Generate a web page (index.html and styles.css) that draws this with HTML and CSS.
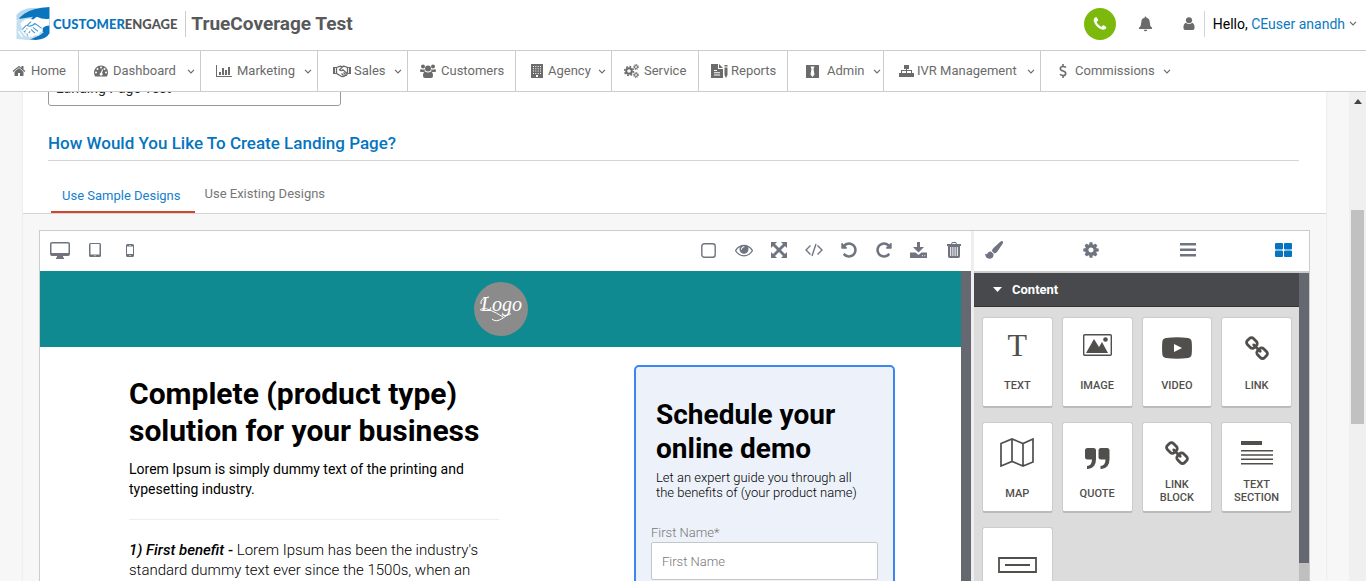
FILE: index.html
```html
<!DOCTYPE html>
<html lang="en">
<head>
<meta charset="utf-8">
<title>TrueCoverage Test</title>
<link rel="stylesheet" href="styles.css">
</head>
<body>
<header class="header">
  <a class="brand" href="#">
    <svg class="brand-mark" viewBox="0 0 34 34" aria-hidden="true">
      <path d="M0 8Q5 2 15 1L24 1 15 8 0 14Z" fill="#b5d7ed"/>
      <path d="M8 7Q16 1 34 0V27Q31 33 20 34L7 33 13 29 4 15 3 11Z" fill="#0b74bf"/>
      <path d="M0 15 4 12 17 10 13 15 28 26 24 29 13 34 0 33Z" fill="#c3dff1"/>
      <path d="M4 17Q10 10 17 13L21 10Q27 13 34 12V19Q29 19 27 22L27 25 24 26 23 29 19 29 16 31 12 29 6 23Z" fill="#fff"/>
      <path d="M15 15 11 19Q15 21 19 17L26 22M17 21 22 25M15 23 19 27M10 19 6 23M11 22 8 26M14 25 11 29" fill="none" stroke="#4e9bd1" stroke-width="1.200"/>
      <path d="M5 24 10 30M9 22 14 31M2 25 6 31" fill="none" stroke="#fff" stroke-width="1.500"/>
    </svg>
    <span class="brand-name"><span class="blue">CUSTOMER</span>ENGAGE</span>
  </a>
  <h1 class="site-title">TrueCoverage Test</h1>
  <div class="account">
    <button class="call" aria-label="Call"><svg viewBox="0 0 1792 1792"><path d="M1600 1240q0 27-10 70.500t-21 68.500q-21 50-122 106-94 51-186 51-27 0-53-3.500t-57.500-12.500-47-14.500-55.500-20.500-49-18q-98-35-175-83-127-79-264-216t-216-264q-48-77-83-175-3-9-18-49t-20.500-55.500-14.500-47-12.500-57.500-3.500-53q0-92 51-186 56-101 106-122 25-11 68.500-21t70.500-10q14 0 21 3 18 6 53 76 11 19 30 54t35 63.500 31 53.500q3 4 17.500 25t21.500 35.500 7 28.500q0 20-28.500 50t-62 55-62 53-28.500 46q0 9 5 22.500t8.500 20.500 14 24 11.500 19q76 137 174 235t235 174q2 1 19 11.500t24 14 20.500 8.500 22.500 5q18 0 46-28.500t53-62 55-62 50-28.500q14 0 28.500 7t35.500 21.500 25 17.500q25 15 53.500 31t63.500 35 54 30q70 35 76 53 3 7 3 21z"/></svg></button>
    <button class="plain" aria-label="Notifications"><svg class="bell" viewBox="0 0 16 16"><path d="M8 0q1 0 1 1.300Q12.500 2 12.500 6q0 4 2.500 6v1.300H1V12q2.500-2 2.500-6 0-4 3.500-4.700Q7 0 8 0ZM6 14h4q-.3 1.800-2 1.800T6 14Z"/></svg></button>
    <button class="plain" aria-label="Profile"><svg class="person" viewBox="0 0 12 14"><circle cx="6" cy="3.500" r="3.300"/><path d="M2.500 6.200Q6 9 9.500 6.200 12 7.200 12 11.500 12 14 10 14H2Q0 14 0 11.500 0 7.200 2.500 6.200Z"/></svg></button>
    <a class="hello" href="#"><span>Hello, <span class="user">CEuser anandh</span></span><svg class="chev" viewBox="0 0 8 5"><path d="M1 .8 4 3.800 7 .8"/></svg></a>
  </div>
</header>

<nav class="nav">
  <a href="#"><svg class="i14" viewBox="0 0 1792 1792"><path d="M1472 992v480q0 26-19 45t-45 19h-384v-384h-256v384h-384q-26 0-45-19t-19-45v-480q0-1 .5-3t.5-3l575-474 575 474q1 2 1 6zm223-69l-62 74q-8 9-21 11h-3q-13 0-21-7l-692-577-692 577q-12 8-24 7-13-2-21-11l-62-74q-8-10-7-23.500t11-21.500l719-599q32-26 76-26t76 26l244 204v-195q0-14 9-23t23-9h192q14 0 23 9t9 23v408l219 182q10 8 11 21.500t-7 23.500z"/></svg><span>Home</span></a>
  <a href="#" class="menu"><svg class="i14" viewBox="0 0 14 14"><path fill-rule="evenodd" d="M7 1.500a7 7 0 0 1 7 7q0 2-1 3.700-.2.300-.6.300H1.600q-.4 0-.6-.3Q0 10.500 0 8.500a7 7 0 0 1 7-7ZM7 2.500a1 1 0 1 0 0 2 1 1 0 0 0 0-2ZM3.500 4a1 1 0 1 0 0 2 1 1 0 0 0 0-2ZM10.500 4a1 1 0 1 0 0 2 1 1 0 0 0 0-2ZM2 7.500a1 1 0 1 0 0 2 1 1 0 0 0 0-2ZM12 7.500a1 1 0 1 0 0 2 1 1 0 0 0 0-2ZM8 5.300 7 8.600a1.500 1.500 0 1 0 1.100.3L9 5.600Z"/></svg><span>Dashboard</span><svg class="chev" viewBox="0 0 8 5"><path d="M1 .8 4 3.800 7 .8"/></svg></a>
  <a href="#" class="menu"><svg class="i16" viewBox="0 0 16 14"><path d="M0 1h1v11h15v1H0ZM3 8h2v3H3ZM6 4h2v7H6ZM9 6h2v5H9ZM12 3h2v8h-2Z"/></svg><span>Marketing</span><svg class="chev" viewBox="0 0 8 5"><path d="M1 .8 4 3.800 7 .8"/></svg></a>
  <a href="#" class="menu tight"><svg class="i18 line" viewBox="0 0 18 14"><path stroke-width="1.300" d="M3.500 3.500 6.500 2.300Q8 2 9 3 10 2 11.500 2.300L14.500 3.500V9.300Q14 11.500 12 11.500 10.500 13.200 8.500 12.500L3.500 9.300ZM9.500 3 6.500 5.800Q8 7.500 10 5.800L14 9.500M8.500 9.500l2 2M10.500 8.500l2 2"/><path stroke-width="2" d="M1 3v7M17 3v7"/><path d="M1 3.500h3M1 9.500h3M14 3.500h3M14 9.500h3"/></svg><span>Sales</span><svg class="chev" viewBox="0 0 8 5"><path d="M1 .8 4 3.800 7 .8"/></svg></a>
  <a href="#"><svg class="i16" viewBox="0 0 16 14"><circle cx="3" cy="2.500" r="2"/><circle cx="13" cy="2.500" r="2"/><circle cx="8" cy="4.500" r="3"/><path d="M1 5q2 1.300 3.500 0Q4.500 6.500 5 7.400L3.500 8H1Q0 8 0 7 0 5.500 1 5ZM15 5q-2 1.300-3.500 0 0 1.500-.5 2.400l1.500.6H15q1 0 1-1 0-1.500-1-2ZM5 7.500q3 2 6 0 2 .8 2 4.500 0 2-2 2H5q-2 0-2-2 0-3.700 2-4.500Z"/></svg><span>Customers</span></a>
  <a href="#" class="menu"><svg class="i12" viewBox="0 0 12 14"><path fill-rule="evenodd" d="M0 0h12v14H0ZM2 2v1h1V2ZM4.300 2v1h1V2ZM6.700 2v1h1V2ZM9 2v1h1V2ZM2 4.300v1h1v-1ZM4.300 4.300v1h1v-1ZM6.700 4.300v1h1v-1ZM9 4.300v1h1v-1ZM2 6.600v1h1v-1ZM4.300 6.600v1h1v-1ZM6.700 6.600v1h1v-1ZM9 6.600v1h1v-1ZM2 9v1h1V9ZM4.300 9v1h1V9ZM6.700 9v1h1V9ZM9 9v1h1V9ZM5 11v2h2v-2Z"/></svg><span>Agency</span><svg class="chev" viewBox="0 0 8 5"><path d="M1 .8 4 3.800 7 .8"/></svg></a>
  <a href="#"><svg class="i15 line" viewBox="0 0 15 14"><circle cx="5" cy="7" r="2.800" stroke-width="2"/><circle cx="5" cy="7" r="4.400" stroke-width="1.600" stroke-dasharray="1.750 1.700"/><circle cx="12" cy="3" r="1.500"/><circle cx="12" cy="3" r="2.500" stroke-dasharray="1.100 .86"/><circle cx="12" cy="11" r="1.500"/><circle cx="12" cy="11" r="2.500" stroke-dasharray="1.100 .86"/></svg><span>Service</span></a>
  <a href="#" class="tight"><svg class="i17" viewBox="0 0 17 14"><path fill-rule="evenodd" d="M0 0h7v5h5v9H0ZM3 6v1h3V6ZM3 8.300v1h6v-1ZM3 10.600v1h6v-1ZM8 0l4 4H8ZM13.500 1h3v1.500h-3ZM13.500 3.500h3V11L15 14l-1.500-3Z"/></svg><span>Reports</span></a>
  <a href="#" class="menu wide"><svg class="i13" viewBox="0 0 13 13"><path fill-rule="evenodd" d="M0 0h13v13H0ZM4.500 1.500 5.500 4 4.500 9.500l2 2.500 2-2.500L7.500 4l1-2.500Z"/></svg><span>Admin</span><svg class="chev" viewBox="0 0 8 5"><path d="M1 .8 4 3.800 7 .8"/></svg></a>
  <a href="#" class="menu tight"><svg class="i15" viewBox="0 0 15 14"><path d="M5 1h5v4H8v1h5v3h2v4h-5V9h2V7H8v2h2v4H5V9h2V7H3v2h2v4H0V9h2V6h5V5H5Z"/></svg><span>IVR Management</span><svg class="chev" viewBox="0 0 8 5"><path d="M1 .8 4 3.800 7 .8"/></svg></a>
  <a href="#" class="menu wide"><svg class="i8 line" viewBox="0 0 8 14"><path stroke-width="1.600" d="M7 3.500Q6 2.500 4 2.500 1.300 2.500 1.300 4.600 1.300 6.300 4 7 6.700 7.700 6.700 9.400 6.700 11.500 4 11.500 2 11.500 1 10.300M4 0v2.500M4 11.500V14"/></svg><span>Commissions</span><svg class="chev" viewBox="0 0 8 5"><path d="M1 .8 4 3.800 7 .8"/></svg></a>
</nav>

<main class="viewport">
  <div class="page">
    <section class="setup">
      <input class="page-name" type="text" value="Landing Page Test" aria-label="Landing page name">
      <h2 class="question">How Would You Like To Create Landing Page?</h2>
      <div class="tabs">
        <a class="tab active" href="#">Use Sample Designs</a>
        <a class="tab" href="#">Use Existing Designs</a>
      </div>
    </section>

    <section class="editor">
      <div class="canvas">
        <div class="toolbar">
          <button aria-label="Desktop"><svg width="20" height="17" viewBox="0 0 20 17"><path fill-rule="evenodd" d="M2 0h16q2 0 2 2v10q0 2-2 2h-5v1.500h1V17H6v-1.500h1V14H2q-2 0-2-2V2Q0 0 2 0ZM2 1.500q-.5 0-.5.500v9h17V2q0-.5-.5-.5Z"/></svg></button>
          <button aria-label="Tablet"><svg width="12" height="14" viewBox="0 0 12 14"><path fill-rule="evenodd" d="M1.500 0h9Q12 0 12 1.500v11q0 1.500-1.500 1.500h-9Q0 14 0 12.500v-11Q0 0 1.500 0ZM1.500 1v10.500h9V1ZM5.500 12.200v1h1v-1Z"/></svg></button>
          <button aria-label="Phone"><svg width="8" height="13" viewBox="0 0 8 13"><path fill-rule="evenodd" d="M1.500 0h5Q8 0 8 1.500v10Q8 13 6.500 13h-5Q0 13 0 11.500v-10Q0 0 1.500 0ZM1 2.500v7.500h6V2.500ZM3 1v.5h2V1ZM3.500 11v1h1v-1Z"/></svg></button>
          <span class="spacer"></span>
          <button aria-label="Outlines"><svg width="15" height="15" viewBox="0 0 15 15"><rect x=".8" y=".8" width="13.400" height="13.400" rx="2.500" fill="none" stroke="#6f7480" stroke-width="1.400"/></svg></button>
          <button aria-label="Preview"><svg width="18" height="18" viewBox="0 0 1792 1792"><path d="M1664 960q-152-236-381-353 61 104 61 225 0 185-131.500 316.500t-316.500 131.500-316.500-131.500-131.500-316.500q0-121 61-225-229 117-381 353 133 205 333.500 326.500t434.500 121.500 434.500-121.500 333.500-326.500zm-720-384q0-20-14-34t-34-14q-125 0-214.500 89.500t-89.500 214.500q0 20 14 34t34 14 34-14 14-34q0-86 61-147t147-61q20 0 34-14t14-34zm848 384q0 34-20 69-140 230-376.500 368.500t-499.500 138.500-499.500-139-376.500-368q-20-35-20-69t20-69q140-229 376.500-368t499.500-139 499.500 139 376.500 368q20 35 20 69z"/></svg></button>
          <button aria-label="Fullscreen"><svg width="16" height="16" viewBox="0 0 16 16"><path d="M0 0h6L4 2l4 4 4-4-2-2h6v6l-2-2-4 4 4 4 2-2v6h-6l2-2-4-4-4 4 2 2H0v-6l2 2 4-4-4-4-2 2Z"/></svg></button>
          <button aria-label="View code"><svg width="18" height="14" viewBox="0 0 18 14"><path d="M5.500 2.500 1 7l4.500 4.500M12.500 2.500 17 7l-4.500 4.500M11 1 7 13" fill="none" stroke="#6f7480" stroke-width="1.400"/></svg></button>
          <button aria-label="Undo"><svg width="18" height="18" viewBox="0 0 1792 1792"><path id="turn" d="M1664 896q0 156-61 298t-164 245-245 164-298 61q-172 0-327-72.500t-264-204.500q-7-10-6.500-22.500t8.500-20.500l137-138q10-9 25-9 16 2 23 12 73 95 179 147t225 52q104 0 198.500-40.500t163.500-109.500 109.500-163.500 40.500-198.500-40.500-198.500-109.500-163.500-163.500-109.500-198.500-40.500q-98 0-188 35.500t-160 101.500l137 138q31 30 14 69-17 40-59 40h-448q-26 0-45-19t-19-45v-448q0-42 40-59 39-17 69 14l130 129q107-101 244.500-156.500t284.500-55.500q156 0 298 61t245 164 164 245 61 298z"/></svg></button>
          <button aria-label="Redo"><svg width="18" height="18" viewBox="0 0 1792 1792"><use href="#turn" transform="translate(1792) scale(-1 1)"/></svg></button>
          <button aria-label="Download"><svg width="17" height="16" viewBox="0 0 17 16"><path fill-rule="evenodd" d="M7 0h3v5h4L8.500 10.500 3 5h4ZM0 10.500h5.500l3 2.500 3-2.500H17V16H0ZM12 13.300v1h1v-1ZM14.300 13.300v1h1v-1Z"/></svg></button>
          <button aria-label="Delete"><svg width="14" height="16" viewBox="0 0 14 16"><path fill-rule="evenodd" d="M5 0h4l1 2h4v2h-1V14q0 2-1.500 2h-9Q1 16 1 14V4H0V2h4ZM5.500 1 5 2h4l-.5-1ZM3.200 5v9h1V5ZM5.400 5v9h1V5ZM7.600 5v9h1V5ZM9.800 5v9h1V5Z"/></svg></button>
        </div>
        <div class="frame">
          <article class="landing">
            <div class="banner">
              <svg class="logo" viewBox="0 0 54 54" role="img" aria-label="Logo"><circle cx="27" cy="27" r="27" fill="#8b8b8b"/><text x="7" y="29" class="logo-text">Logo</text><path d="M6 28Q9 25 16 28T29 35M18 37Q22 41 29 36T37 32M7 22Q6 16 15 15" fill="none" stroke="#fff"/></svg>
            </div>
            <div class="columns">
              <div class="copy">
                <h2 class="headline">Complete (product type) solution for your business</h2>
                <p class="lead">Lorem Ipsum is simply dummy text of the printing and typesetting industry.</p>
                <p class="benefit"><b><i>1) First benefit</i> - </b>Lorem Ipsum has been the industry's standard dummy text ever since the 1500s, when an</p>
              </div>
              <form class="demo">
                <h3 class="demo-title">Schedule your online demo</h3>
                <p class="demo-text">Let an expert guide you through all the benefits of (your product name)</p>
                <label class="field" for="first-name">First Name*</label>
                <input class="box" id="first-name" type="text" placeholder="First Name">
              </form>
            </div>
          </article>
          <div class="track"></div>
        </div>
      </div>

      <aside class="side">
        <div class="side-tabs">
          <button aria-label="Styles"><svg width="18" height="18" viewBox="0 0 18 18"><path d="M17.500.3q1.200.9-.2 3L12 11q-1.400 1.600-3 1.200L7 10q-.2-1.300 1.500-3L15 1Q16.700-.3 17.500.3ZM6.300 10.800 8.500 13q.4 4.700-4.300 4.700Q.5 17.500 0 12.500q1.300 1.300 2.300.3 1.500-2.800 4-2Z"/></svg></button>
          <button aria-label="Settings"><svg width="18" height="18" viewBox="0 0 1792 1792"><path d="M1152 896q0-106-75-181t-181-75-181 75-75 181 75 181 181 75 181-75 75-181zm512-109v222q0 12-8 23t-20 13l-185 28q-19 54-39 91 35 50 107 138 10 12 10 25t-9 23q-27 37-99 108t-94 71q-12 0-26-9l-138-108q-44 23-91 38-16 136-29 186-7 28-36 28h-222q-14 0-24.500-8.500t-11.500-21.500l-28-184q-49-16-90-37l-141 107q-10 9-25 9-14 0-25-11-126-114-165-168-7-10-7-23 0-12 8-23 15-21 51-66.500t54-70.500q-27-50-41-99l-183-27q-13-2-21-12.500t-8-23.500v-222q0-12 8-23t19-13l186-28q14-46 39-92-40-57-107-138-10-12-10-24 0-10 9-23 26-36 98.500-107.500t94.500-71.500q13 0 26 10l138 107q44-23 91-38 16-136 29-186 7-28 36-28h222q14 0 24.500 8.500t11.500 21.500l28 184q49 16 90 37l142-107q9-9 24-9 13 0 25 10 129 119 165 170 7 8 7 22 0 12-8 23-15 21-51 66.500t-54 70.500q26 50 41 98l183 28q13 2 21 12.500t8 23.500z"/></svg></button>
          <button aria-label="Layers"><svg width="16" height="14" viewBox="0 0 16 14"><path d="M0 0h16v2.600H0ZM0 5.500h16v2.600H0ZM0 11h16v2.600H0Z"/></svg></button>
          <button aria-label="Blocks" class="on"><svg width="17" height="14" viewBox="0 0 17 14"><rect width="8" height="6.500" rx="1"/><rect x="9" width="8" height="6.500" rx="1"/><rect y="7.500" width="8" height="6.500" rx="1"/><rect x="9" y="7.500" width="8" height="6.500" rx="1"/></svg></button>
        </div>
        <div class="side-body">
          <div class="blocks">
            <button class="category"><svg width="9" height="5" viewBox="0 0 9 5"><path d="M0 0h9L4.500 5Z"/></svg>Content</button>
            <div class="grid">
              <button class="block"><span class="pic serif-t" aria-hidden="true">T</span>TEXT</button>
              <button class="block"><span class="pic"><svg width="29" height="22" viewBox="0 0 29 22"><rect x=".7" y=".7" width="27.600" height="20.600" rx="1" fill="none" stroke="#514f4c" stroke-width="1.400"/><path d="M3 19 11 5l5 8 3-5 6 11Z"/><circle cx="22.500" cy="5.500" r="2.300"/></svg></span>IMAGE</button>
              <button class="block"><span class="pic low"><svg width="30" height="22" viewBox="0 0 30 22"><path fill-rule="evenodd" d="M4 1Q15-.7 26 1q3.500.5 3.700 4 .5 6 0 12-.2 3.500-3.700 4-11 1.500-22 0-3.500-.5-3.700-4-.5-6 0-12Q.5 1.500 4 1ZM12 7v8l8-4Z"/></svg></span>VIDEO</button>
              <button class="block"><span class="pic low2"><svg width="26" height="26" viewBox="0 0 1792 1792"><path id="chain" d="M1520 1216q0-40-28-68l-208-208q-28-28-68-28-42 0-72 32 3 3 19 18.500t21.500 21.500 15 19 13 25.500 3.500 27.500q0 40-28 68t-68 28q-15 0-27.500-3.500t-25.500-13-19-15-21.500-21.500-18.500-19q-33 31-33 73 0 40 28 68l206 207q27 27 68 27 40 0 68-26l147-146q28-28 28-67zm-703-705q0-40-28-68l-206-207q-28-28-68-28-39 0-68 27l-147 146q-28 28-28 67 0 40 28 68l208 208q27 27 68 27 42 0 72-31-3-3-19-18.500t-21.500-21.500-15-19-13-25.500-3.500-27.500q0-40 28-68t68-28q15 0 27.500 3.500t25.500 13 19 15 21.500 21.500 18.500 19q33-31 33-73zm895 705q0 120-85 203l-147 146q-83 83-203 83-121 0-204-85l-206-207q-83-83-83-203 0-123 88-209l-88-88q-86 88-208 88-120 0-204-84l-208-208q-84-84-84-204t85-203l147-146q83-83 203-83 121 0 204 85l206 207q83 83 83 203 0 123-88 209l88 88q86-88 208-88 120 0 204 84l208 208q84 84 84 204z"/></svg></span>LINK</button>
              <button class="block"><span class="pic tall"><svg width="34" height="29" viewBox="0 0 34 29"><path d="M1 5.500 12 1l11 4.500L33 1v23l-10 4-11-4.500L1 28ZM12 1v22.500M23 5.500V28" fill="none" stroke="#514f4c" stroke-width="1.700"/></svg></span>MAP</button>
              <button class="block"><span class="pic tall drop"><svg width="25" height="21" viewBox="0 0 25 21"><path id="q" d="M2.500 0h6Q11 0 11 2.500V11Q11 20 3 21H2v-3q5-.5 5-6.500H2.500Q0 11.500 0 9V2.500Q0 0 2.500 0Z"/><use href="#q" x="13.500"/></svg></span>QUOTE</button>
              <button class="block two"><span class="pic"><svg width="26" height="26" viewBox="0 0 1792 1792"><use href="#chain"/></svg></span>LINK BLOCK</button>
              <button class="block two"><span class="pic"><svg width="32" height="24" viewBox="0 0 32 24"><path d="M0 0h21v4H0ZM0 9h32v1.400H0ZM0 13.300h32v1.400H0ZM0 17.600h32V19H0ZM0 22h32v1.400H0Z"/></svg></span>TEXT SECTION</button>
              <button class="block last" aria-label="Input"><svg width="39" height="16" viewBox="0 0 39 16"><path d="M1 1h37v14H1ZM7 8h25" fill="none" stroke="#514f4c" stroke-width="1.800"/></svg></button>
            </div>
          </div>
          <div class="track side-track"></div>
        </div>
      </aside>
    </section>
  </div>
  <div class="scrollbar"><svg width="8" height="5" viewBox="0 0 8 5"><path d="M0 5 4 0l4 5Z"/></svg><div class="thumb"></div></div>
</main>
</body>
</html>
```
FILE: styles.css
```css
* { box-sizing: border-box; }
body {
  margin: 0;
  height: 100vh;
  display: flex;
  flex-direction: column;
  overflow: hidden;
  background: #fff;
  color: #000;
  font: 14px/20px Roboto, "Liberation Sans", sans-serif;
}
h1, h2, h3, p { margin: 0; }
a { color: inherit; text-decoration: none; }
button { border: 0; padding: 0; background: none; font: inherit; color: inherit; }
svg { display: block; flex: none; fill: currentColor; }

.header {
  flex: none;
  height: 51px;
  display: flex;
  align-items: center;
  padding: 0 9px 3px 16px;
  border-bottom: 1px solid #ccc;
}
.brand { display: flex; align-items: center; gap: 3px; }
.brand-mark { width: 34px; height: 33px; }
.brand-name { color: #555; font: 900 13px/20px Lato, sans-serif; }
.blue { color: #0b74bf; }
.site-title {
  margin-left: 8px;
  padding-left: 5px;
  border-left: 1px solid #ccc;
  color: #58595b;
  font-size: 19px;
  font-weight: 700;
  line-height: 26px;
}
.account { display: flex; align-items: center; margin-left: auto; color: #6b6b6b; }
.call {
  width: 32px;
  height: 32px;
  display: grid;
  place-items: center;
  border-radius: 50%;
  background: #7cb90c;
  color: #fff;
}
.call svg { width: 16px; height: 16px; }
.plain { margin-left: 22px; }
.bell { width: 15px; height: 16px; }
.plain + .plain { margin-left: 30px; }
.person { width: 12px; height: 13px; }
.hello {
  display: flex;
  align-items: center;
  gap: 4px;
  margin-left: 9px;
  padding-left: 8px;
  border-left: 1px solid #cdd8dd;
  color: #000;
  line-height: 26px;
}
.user { color: #0b7ac0; }
.chev { width: 8px; height: 5px; fill: none; stroke: #6b6b6b; stroke-width: 1.2; }

.nav {
  flex: none;
  height: 41px;
  display: grid;
  grid-template-columns: 79px 122px 117px 90px 108px 96px 87px 89px 96px 157px 1fr;
  border-bottom: 1px solid #ccc;
  color: #6b6b6b;
  font-size: 13px;
}
.nav a {
  display: flex;
  align-items: center;
  gap: 5px;
  padding-left: 12px;
  border-right: 1px solid #ccc;
}
.nav .menu { padding: 0 5px 0 15px; }
.nav .menu .chev { margin-left: auto; }
.nav .tight { gap: 3px; }
.nav .wide { gap: 8px; padding-left: 18px; }
.nav a:last-child { border-right: 0; }
.nav a:last-child .chev { margin-left: 0; }
.line { fill: none; stroke: currentColor; }
.i8 { width: 8px; height: 14px; }
.i12 { width: 12px; height: 14px; }
.i13 { width: 13px; height: 13px; }
.i14 { width: 14px; height: 14px; }
.i15 { width: 15px; height: 14px; }
.i16 { width: 16px; height: 14px; }
.i17 { width: 17px; height: 14px; }
.i18 { width: 18px; height: 14px; }

.viewport { flex: 1; min-height: 0; display: flex; overflow: hidden; background: #f7f7f7; }
.page {
  flex: 1;
  margin: 0 23px;
  display: flex;
  flex-direction: column;
  box-shadow: 0 0 2px #ddd;
}
.setup { flex: none; margin-top: -20px; padding: 0 25px; background: #fff; border-bottom: 1px solid #d5d5d5; }
.page-name {
  display: block;
  width: 293px;
  height: 34px;
  padding: 0 7px 2px;
  border: 1px solid #999;
  border-radius: 3px;
  color: #222;
  font: 14px/20px Roboto, sans-serif;
}
.question {
  margin: 25px 2px 0 0;
  padding-bottom: 5px;
  border-bottom: 1px solid #d5d5d5;
  color: #0575c0;
  font-size: 17px;
  font-weight: 500;
  line-height: 24px;
}
.tabs { display: flex; gap: 10px; padding: 23px 3px 0; color: #777; font-size: 13px; }
.tab { line-height: 20px; }
.tab.active { padding: 2px 14px 5px 11px; border-bottom: 2px solid #d4432c; color: #1680cd; }

.editor {
  flex: 1;
  min-height: 0;
  display: flex;
  margin: 16px 16px 0;
  border: 1px solid #ccc;
  border-bottom: 0;
}
.canvas { flex: 1; display: flex; flex-direction: column; border-right: 3px solid #eee; }
.toolbar {
  flex: none;
  height: 40px;
  display: flex;
  align-items: center;
  padding: 0 0 2px 2px;
  background: #fff;
  color: #6f7480;
}
.toolbar button { width: 35px; height: 38px; display: grid; place-items: center; }
.spacer { flex: 1; }
.frame { flex: 1; min-height: 0; display: flex; overflow: hidden; }
.track { flex: none; width: 10px; background: #656771; }
.landing { flex: 1; background: #fff; }
.banner { height: 76px; display: grid; place-items: center; background: #0e8a90; }
.logo { width: 54px; height: 54px; }
.logo-text { fill: #fff; font: italic 20px "Liberation Serif", serif; }
.columns { display: flex; justify-content: space-between; padding: 18px 66px 0 89px; }
.copy { width: 370px; padding-top: 10px; }
.headline { font-size: 30px; font-weight: 700; line-height: 37px; }
.lead { margin-top: 10px; padding-bottom: 20px; border-bottom: 1px solid #eee; }
.benefit { margin-top: 20px; font-size: 15px; font-weight: 300; }
.benefit b { font-weight: 500; }
.demo {
  width: 261px;
  height: 400px;
  padding: 31px 15px;
  border: 2px solid #3c86f0;
  border-radius: 5px;
  background: #edf2fa;
}
.demo-title { padding: 0 5px; font-size: 28px; font-weight: 700; line-height: 34px; }
.demo-text { margin: 4px 0 24px; padding: 0 20px 0 5px; font-size: 13px; font-weight: 300; line-height: 15px; }
.field { display: block; padding-bottom: 1px; color: #777; font-size: 13px; font-weight: 300; line-height: 17px; }
.box {
  width: 100%;
  height: 38px;
  padding: 0 10px;
  border: 1px solid #c6c6c6;
  border-radius: 2px;
  font: 300 13px/20px Roboto, sans-serif;
}
.box::placeholder { color: #777; opacity: 1; }

.side { flex: none; width: 335px; display: flex; flex-direction: column; }
.side-tabs {
  flex: none;
  height: 42px;
  display: flex;
  justify-content: space-between;
  align-items: center;
  padding: 0 17px 2px 11px;
  border-bottom: 2px solid #ccc;
  background: #fff;
  color: #6f7480;
}
.side-tabs .on { color: #0575c0; }
.side-body { flex: 1; min-height: 0; display: flex; overflow: hidden; }
.blocks { flex: 1; background: #dcdcdc; }
.category {
  width: 100%;
  height: 34px;
  display: flex;
  align-items: center;
  gap: 10px;
  padding: 0 19px;
  border-bottom: 1px solid #333;
  background: #48494c;
  color: #fff;
  font-size: 13px;
  font-weight: 700;
}
.grid { display: grid; grid-template-columns: repeat(4, 1fr); gap: 14px 9px; padding: 10px 7px 10px 8px; }
.block {
  height: 91px;
  display: flex;
  flex-direction: column;
  align-items: center;
  border: 1px solid #ccc;
  border-bottom: 2px solid #bbb;
  border-radius: 3px;
  background: #fff;
  color: #514f4c;
  font-size: 11px;
  font-weight: 500;
  line-height: 13px;
}
.pic { height: 61px; display: flex; align-items: flex-start; padding-top: 16px; }
.serif-t { padding-top: 7px; font: 32px/40px "Liberation Serif", serif; }
.low { padding-top: 19px; }
.low2 { padding-top: 18px; }
.tall { height: 64px; padding-top: 15px; }
.drop { padding-top: 25px; }
.two { padding: 0 6px; }
.two .pic { height: 55px; padding-top: 18px; }
.last { padding-top: 29px; }
.side-track { border-bottom: 18px solid #bfbfbf; }

.scrollbar { flex: none; width: 17px; display: flex; flex-direction: column; align-items: center; padding-top: 7px; background: #f0f0f0; color: #444; }
.thumb { width: 13px; height: 214px; margin-top: 106px; background: #c1c1c1; }
```
